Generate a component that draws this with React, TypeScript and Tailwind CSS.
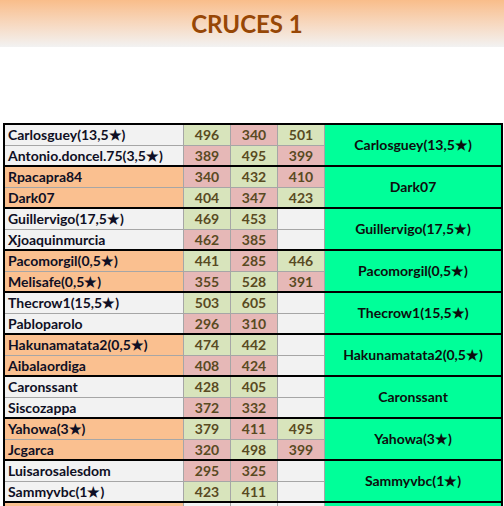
import React from "react";

type Row = { name: string; scores: (number | null)[] };
type Pair = { a: Row; b: Row; winner: string };

const pairs: Pair[] = [
  { a: { name: "Carlosguey(13,5★)", scores: [496, 340, 501] }, b: { name: "Antonio.doncel.75(3,5★)", scores: [389, 495, 399] }, winner: "Carlosguey(13,5★)" },
  { a: { name: "Rpacapra84", scores: [340, 432, 410] }, b: { name: "Dark07", scores: [404, 347, 423] }, winner: "Dark07" },
  { a: { name: "Guillervigo(17,5★)", scores: [469, 453, null] }, b: { name: "Xjoaquinmurcia", scores: [462, 385, null] }, winner: "Guillervigo(17,5★)" },
  { a: { name: "Pacomorgil(0,5★)", scores: [441, 285, 446] }, b: { name: "Melisafe(0,5★)", scores: [355, 528, 391] }, winner: "Pacomorgil(0,5★)" },
  { a: { name: "Thecrow1(15,5★)", scores: [503, 605, null] }, b: { name: "Pabloparolo", scores: [296, 310, null] }, winner: "Thecrow1(15,5★)" },
  { a: { name: "Hakunamatata2(0,5★)", scores: [474, 442, null] }, b: { name: "Aibalaordiga", scores: [408, 424, null] }, winner: "Hakunamatata2(0,5★)" },
  { a: { name: "Caronssant", scores: [428, 405, null] }, b: { name: "Siscozappa", scores: [372, 332, null] }, winner: "Caronssant" },
  { a: { name: "Yahowa(3★)", scores: [379, 411, 495] }, b: { name: "Jcgarca", scores: [320, 498, 399] }, winner: "Yahowa(3★)" },
  { a: { name: "Luisarosalesdom", scores: [295, 325, null] }, b: { name: "Sammyvbc(1★)", scores: [423, 411, null] }, winner: "Sammyvbc(1★)" },
  { a: { name: "", scores: [null, null, null] }, b: { name: "", scores: [null, null, null] }, winner: "" },
];

function ScoreCell({ value, other, top }: { value: number | null; other: number | null; top: boolean }) {
  const border = top ? "border-b border-[#a6a6a6]" : "";
  if (value === null) {
    return <div className={`bg-[#f2f2f2] border-r border-[#a6a6a6] ${border}`} />;
  }
  const win = other === null || value > other;
  return (
    <div
      className={`flex items-center justify-center border-r border-[#a6a6a6] ${border} ${
        win ? "bg-[#d8e4bc]" : "bg-[#e6b8b7]"
      } text-[#594a22]`}
    >
      {value}
    </div>
  );
}

function PairBlock({ pair, index }: { pair: Pair; index: number }) {
  const nameBg = index % 2 === 0 ? "bg-[#f2f2f2]" : "bg-[#fac090]";
  return (
    <div
      className={`grid grid-cols-[179px_47px_47px_47px_1fr] grid-rows-[21px_19px] ${
        index > 0 ? "border-t-2 border-black" : ""
      }`}
    >
      <div className={`${nameBg} flex items-center pl-[3px] border-r border-b border-[#a6a6a6] text-[#0f0f24] whitespace-nowrap`}>
        {pair.a.name}
      </div>
      {pair.a.scores.map((s, i) => (
        <ScoreCell key={i} value={s} other={pair.b.scores[i]} top />
      ))}
      <div className="row-span-2 bg-[#00ff99] flex items-center justify-center text-[#0d0d0d]">
        {pair.winner}
      </div>
      <div className={`${nameBg} flex items-center pl-[3px] border-r border-[#a6a6a6] text-[#0f0f24] whitespace-nowrap`}>
        {pair.b.name}
      </div>
      {pair.b.scores.map((s, i) => (
        <ScoreCell key={i} value={s} other={pair.a.scores[i]} top={false} />
      ))}
    </div>
  );
}

export default function App() {
  return (
    <div className="h-[506px] overflow-hidden bg-white font-['Lato',sans-serif] font-bold">
      <div className="h-[47px] flex items-center justify-center pr-[10px] bg-gradient-to-b from-[#f9bd8a] to-[#f2f2f2]">
        <h1 className="text-[24px] text-[#974706]">CRUCES 1</h1>
      </div>
      <div className="h-[76px]" />
      <div className="ml-[3px] w-[500px] border-2 border-black text-[14px] leading-none">
        {pairs.map((p, i) => (
          <PairBlock key={i} pair={p} index={i} />
        ))}
      </div>
    </div>
  );
}
